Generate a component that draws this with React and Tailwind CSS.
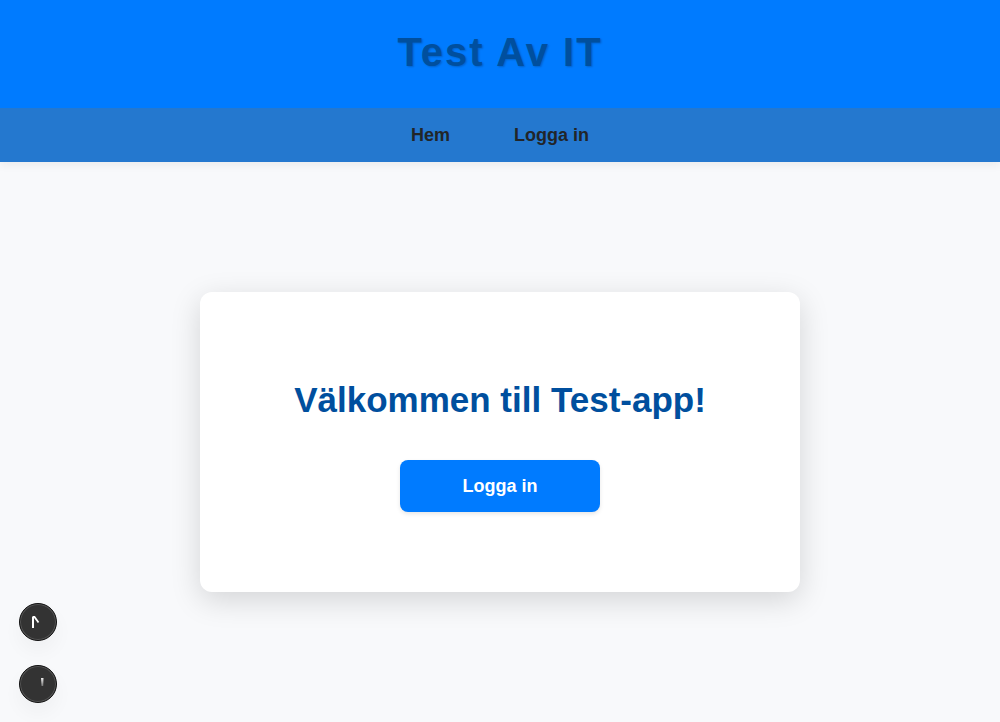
import React from "react";

const floatingButton =
  "flex size-[38px] items-center justify-center rounded-full border border-[#111111] bg-[#333333] shadow-[0_10px_20px_rgba(0,0,0,0.04),inset_0_0_0_1px_#555555]";

function Header() {
  return (
    <header className="relative z-10 shadow-[0_4px_8px_rgba(0,0,0,0.05)]">
      <div className="flex items-center justify-center bg-[#007bff] pt-6 pb-7">
        <h1 className="text-[40px] leading-[56px] font-bold tracking-[2px] text-[#004f9e] [text-shadow:1px_1px_2px_rgba(0,0,0,0.2)]">
          Test Av IT
        </h1>
      </div>
      <nav className="flex justify-center gap-16 bg-[#2478cf] py-[15px] text-lg leading-6 font-bold text-[#212529]">
        <a href="#hem">Hem</a>
        <a href="#logga-in">Logga in</a>
      </nav>
    </header>
  );
}

export default function App() {
  return (
    <div className="flex min-h-screen flex-col bg-[#f8f9fb] font-['Liberation_Sans',Arial,sans-serif]">
      <Header />
      <main className="flex grow items-center justify-center px-4">
        <section className="flex w-full max-w-[600px] flex-col items-center gap-8 rounded-xl bg-white px-10 py-20 shadow-[0_8px_30px_rgba(0,0,0,0.15)]">
          <h2 className="text-center text-[35px] leading-[56px] font-bold text-[#004f9e]">
            Välkommen till Test-app!
          </h2>
          <button
            type="button"
            className="w-[200px] rounded-lg bg-[#007bff] py-[14px] text-lg leading-6 font-bold text-white shadow-[0_2px_4px_rgba(0,0,0,0.1)]"
          >
            Logga in
          </button>
        </section>
      </main>
      <div className="fixed bottom-[19px] left-[19px] z-20 flex flex-col gap-6">
        <button type="button" aria-label="Navigering" className={floatingButton}>
          <svg width="36" height="36" viewBox="0 0 36 36" fill="none" aria-hidden="true">
            <path d="M13 24V12.5" stroke="white" strokeWidth="2" />
            <path d="M13 13H14.5L18.5 18.5" stroke="white" strokeWidth="1.8" />
          </svg>
        </button>
        <button type="button" aria-label="Information" className={floatingButton}>
          <svg width="36" height="36" viewBox="0 0 36 36" fill="none" aria-hidden="true">
            <defs>
              <linearGradient id="fade" x1="0" y1="0" x2="0" y2="1">
                <stop offset="0" stopColor="#eeeeee" />
                <stop offset="1" stopColor="#777777" />
              </linearGradient>
            </defs>
            <path d="M21 12H23.5L23.2 20H21.5Z" fill="url(#fade)" />
          </svg>
        </button>
      </div>
    </div>
  );
}
